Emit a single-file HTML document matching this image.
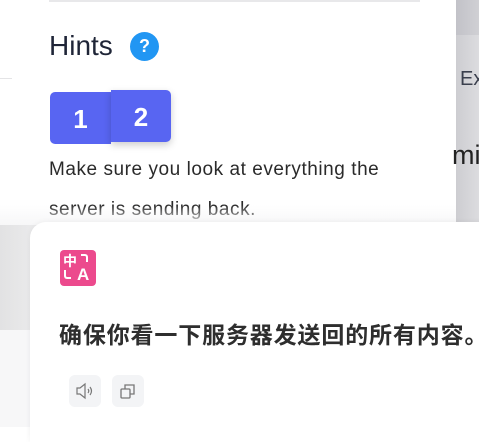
<!DOCTYPE html>
<html><head><meta charset="utf-8"><style>
*{margin:0;padding:0;box-sizing:border-box}
body{width:479px;height:427px;overflow:hidden;background:#fff;position:relative;font-family:"Liberation Sans","Noto Sans CJK SC",sans-serif}
.abs{position:absolute}
</style></head><body>
<div class="abs" style="left:456px;top:0;width:23px;height:35px;background:linear-gradient(90deg,#c2c2c8,#d0d0d4)"></div>
<div class="abs" style="left:456px;top:35px;width:23px;height:187px;background:linear-gradient(90deg,#cdcdd1,#dcdcdf)"></div>
<div class="abs" style="left:460px;top:68px;font-size:20px;color:#3a3f4d;font-weight:300">Ex</div>
<div class="abs" style="left:452px;top:140px;font-size:27px;color:#222">mi</div>
<div class="abs" style="left:49px;top:0;width:371px;height:2px;background:#e8e8ea"></div>
<div class="abs" style="left:0;top:78px;width:12px;height:1px;background:#e4e4e6"></div>
<div class="abs" style="left:49px;top:30px;font-size:28px;color:#1f2537">Hints</div>
<div class="abs" style="left:130px;top:32px;width:29px;height:29px;border-radius:50%;background:#2196f3;color:#fff;font-weight:bold;font-size:18px;text-align:center;line-height:29px">?</div>
<div class="abs" style="left:50px;top:92px;width:61px;height:52px;background:#5865f2;border-radius:5px 0 0 5px;color:#fff;font-weight:bold;font-size:26px;text-align:center;line-height:54px">1</div>
<div class="abs" style="left:111px;top:90px;width:60px;height:52px;background:#5865f2;border-radius:0 5px 5px 0;box-shadow:0 3px 8px rgba(0,0,0,.2);color:#fff;font-weight:bold;font-size:26px;text-align:center;line-height:54px">2</div>
<div class="abs" style="left:49px;top:150px;font-size:19px;letter-spacing:0.55px;line-height:40px;color:#2a2a2a;width:420px;white-space:nowrap">Make sure you look at everything the<br>server is sending back.</div>
<div class="abs" style="left:0;top:205px;width:456px;height:20px;background:linear-gradient(180deg,rgba(255,255,255,0),rgba(246,246,247,.9))"></div>
<div class="abs" style="left:0;top:225px;width:40px;height:105px;background:linear-gradient(90deg,#e2e2e3,#ececed)"></div>
<div class="abs" style="left:0;top:330px;width:40px;height:97px;background:#f7f7f8"></div>
<div class="abs" style="left:30px;top:222px;width:470px;height:220px;background:#fff;border-radius:16px 0 0 0;box-shadow:0 0 6px rgba(0,0,0,.06)"></div>
<div class="abs" style="left:60px;top:250px;width:36px;height:36px;border-radius:4px;background:#ec4a8d;color:#fff">
<div class="abs" style="left:3px;top:1px;font-size:14px;font-weight:bold">中</div>
<div class="abs" style="left:17px;top:15px;font-size:17px;font-weight:bold">A</div>
<div class="abs" style="left:4px;top:20px;width:7px;height:9px;border:2px solid #fff;border-right:none;border-top:none;border-radius:0 0 0 3px"></div>
<div class="abs" style="left:21px;top:4px;width:7px;height:8px;border:2px solid #fff;border-left:none;border-bottom:none;border-radius:0 3px 0 0"></div>
</div>
<div class="abs" style="left:59px;top:316px;font-size:23px;font-weight:bold;color:#2e2e2e;white-space:nowrap;letter-spacing:0.85px">确保你看一下服务器发送回的所有内容。</div>
<div class="abs" style="left:69px;top:375px;width:32px;height:32px;border-radius:6px;background:#f3f4f6">
<svg width="32" height="32" viewBox="0 0 32 32" fill="none" stroke="#777" stroke-width="1.2"><path d="M8 13h3l5-4v14l-5-4H8z"/><path d="M19 14q1.5 2 0 4M21 12q3 4 0 8"/></svg></div>
<div class="abs" style="left:112px;top:375px;width:32px;height:32px;border-radius:6px;background:#f3f4f6">
<svg width="32" height="32" viewBox="0 0 32 32" fill="none" stroke="#777" stroke-width="1.3"><rect x="9" y="14" width="9" height="9" rx="1"/><path d="M13 14v-4h9v9h-4"/></svg></div>
</body></html>
